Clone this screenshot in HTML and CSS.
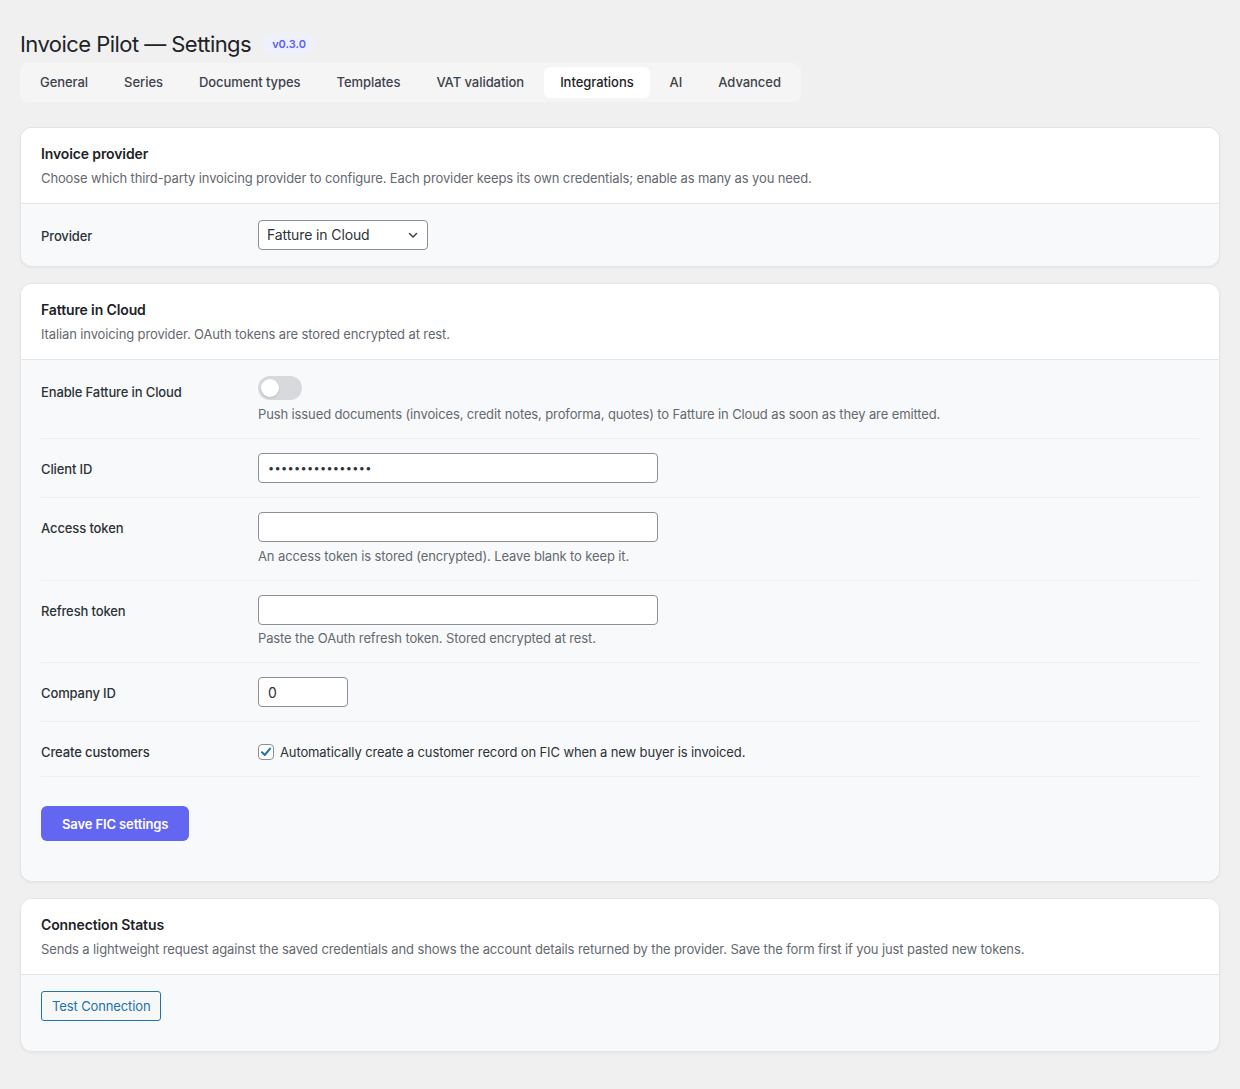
FILE: index.html
```html
<!DOCTYPE html>
<html lang="en">
<head>
<meta charset="utf-8">
<title>Invoice Pilot — Settings</title>
<link rel="stylesheet" href="styles.css">
</head>
<body>
<div class="wrap">
  <div class="page-head">
    <h1 class="page-title">Invoice Pilot — Settings</h1>
    <span class="version">v0.3.0</span>
  </div>

  <nav class="tabs">
    <a class="tab" href="#">General</a>
    <a class="tab" href="#">Series</a>
    <a class="tab" href="#">Document types</a>
    <a class="tab" href="#">Templates</a>
    <a class="tab" href="#">VAT validation</a>
    <a class="tab is-active" href="#">Integrations</a>
    <a class="tab" href="#">AI</a>
    <a class="tab" href="#">Advanced</a>
  </nav>

  <section class="card">
    <header class="card-head">
      <h2 class="card-title">Invoice provider</h2>
      <p class="card-desc">Choose which third-party invoicing provider to configure. Each provider keeps its own credentials; enable as many as you need.</p>
    </header>
    <div class="card-body">
      <div class="field-row field-row-single">
        <div class="field-label">Provider</div>
        <div class="field-control">
          <div class="select">
            <span>Fatture in Cloud</span>
            <svg class="chevron" width="12" height="12" viewBox="0 0 12 12" aria-hidden="true"><path d="M2.5 4.5 6 8l3.5-3.5" fill="none" stroke="#3c434a" stroke-width="1.5" stroke-linecap="round" stroke-linejoin="round"/></svg>
          </div>
        </div>
      </div>
    </div>
  </section>

  <section class="card">
    <header class="card-head">
      <h2 class="card-title">Fatture in Cloud</h2>
      <p class="card-desc">Italian invoicing provider. OAuth tokens are stored encrypted at rest.</p>
    </header>
    <div class="card-body card-body-form">
      <div class="field-row field-row-first">
        <div class="field-label field-label-toggle">Enable Fatture in Cloud</div>
        <div class="field-control">
          <span class="toggle"><span class="toggle-knob"></span></span>
          <p class="help help-toggle">Push issued documents (invoices, credit notes, proforma, quotes) to Fatture in Cloud as soon as they are emitted.</p>
        </div>
      </div>
      <div class="field-row">
        <div class="field-label">Client ID</div>
        <div class="field-control">
          <input class="text-input wide" type="password" value="abcdefghijklmnop">
        </div>
      </div>
      <div class="field-row">
        <div class="field-label">Access token</div>
        <div class="field-control">
          <input class="text-input wide" type="text" value="">
          <p class="help">An access token is stored (encrypted). Leave blank to keep it.</p>
        </div>
      </div>
      <div class="field-row">
        <div class="field-label">Refresh token</div>
        <div class="field-control">
          <input class="text-input wide" type="text" value="">
          <p class="help">Paste the OAuth refresh token. Stored encrypted at rest.</p>
        </div>
      </div>
      <div class="field-row">
        <div class="field-label">Company ID</div>
        <div class="field-control">
          <input class="text-input narrow" type="text" value="0">
        </div>
      </div>
      <div class="field-row">
        <div class="field-label">Create customers</div>
        <div class="field-control field-control-check">
          <label class="check">
            <span class="check-box">
              <svg width="14" height="14" viewBox="0 0 14 14" aria-hidden="true"><path d="M3 7.3 5.8 10 11 3.6" fill="none" stroke="#2271b1" stroke-width="2" stroke-linecap="round" stroke-linejoin="round"/></svg>
            </span>
            <span>Automatically create a customer record on FIC when a new buyer is invoiced.</span>
          </label>
        </div>
      </div>
      <div class="form-actions">
        <button class="btn-primary" type="button">Save FIC settings</button>
      </div>
    </div>
  </section>

  <section class="card">
    <header class="card-head">
      <h2 class="card-title">Connection Status</h2>
      <p class="card-desc">Sends a lightweight request against the saved credentials and shows the account details returned by the provider. Save the form first if you just pasted new tokens.</p>
    </header>
    <div class="card-body card-body-status">
      <button class="btn-secondary" type="button">Test Connection</button>
    </div>
  </section>
</div>
</body>
</html>
```

FILE: styles.css
```css
* {
  box-sizing: border-box;
}

html,
body {
  margin: 0;
  padding: 0;
}

body {
  background: #f0f0f1;
  color: #1d2327;
  font-family: Inter, "Noto Sans", "Liberation Sans", sans-serif;
  font-size: 13px;
  line-height: 20px;
  letter-spacing: -0.12px;
}

.wrap {
  padding: 29px 20px 20px;
}

/* Page heading */
.page-head {
  display: flex;
  align-items: center;
  gap: 12px;
  height: 30px;
}

.page-title {
  margin: 0;
  font-size: 22px;
  font-weight: 400;
  line-height: 30px;
  color: #1d2327;
  letter-spacing: -0.55px;
}

.version {
  display: inline-block;
  padding: 0 9px;
  height: 20px;
  line-height: 20px;
  border-radius: 10px;
  background: #eef0fe;
  color: #5a5ff0;
  font-size: 11px;
  font-weight: 600;
  letter-spacing: 0;
}

/* Tabs */
.tabs {
  display: inline-flex;
  gap: 4px;
  margin-top: 4px;
  padding: 4px;
  background: #f5f5f6;
  border-radius: 8px;
}

.tab {
  display: block;
  height: 31px;
  line-height: 31px;
  padding: 0 16px;
  border-radius: 6px;
  color: #3c434a;
  font-size: 13px;
  font-weight: 500;
  letter-spacing: -0.05px;
  text-decoration: none;
}

.tab.is-active {
  background: #ffffff;
  color: #1d2327;
}

/* Cards */
.card {
  margin-top: 25px;
  background: #f8f9fa;
  border: 1px solid #e4e5e7;
  border-radius: 12px;
  box-shadow: 0 1px 3px rgba(0, 0, 0, 0.05);
  overflow: hidden;
}

.card + .card {
  margin-top: 16px;
}

.card-head {
  padding: 16px 20px 15px;
  background: #ffffff;
  border-bottom: 1px solid #e4e5e7;
}

.card-title {
  margin: 0 0 4px;
  font-size: 14px;
  line-height: 20px;
  font-weight: 600;
  color: #1d2327;
}

.card-desc {
  margin: 0;
  color: #646970;
  font-size: 13px;
  line-height: 20px;
}

.card-body {
  padding: 16px 20px;
}

.card-body-form {
  padding-bottom: 16px;
}

.card-body-status {
  padding-bottom: 30px;
}

/* Form rows */
.field-row {
  display: flex;
  padding: 14px 0;
  border-bottom: 1px solid #eceef0;
}

.field-row-first {
  padding-top: 0;
}

.field-row-single {
  padding: 0;
  border-bottom: 0;
}

.field-label {
  flex: 0 0 217px;
  padding-top: 6px;
  color: #2c3338;
  font-weight: 500;
  line-height: 20px;
}

.field-label-toggle {
  padding-top: 6px;
}

.field-control {
  flex: 1;
  min-width: 0;
}

.field-control-check {
  padding-top: 6px;
}

.help {
  margin: 3.5px 0 0;
  color: #646970;
  line-height: 20px;
}

.help-toggle {
  margin-top: 4px;
}

/* Select */
.select {
  display: flex;
  align-items: center;
  justify-content: space-between;
  width: 170px;
  height: 30px;
  padding: 0 8px 0 8px;
  background: #ffffff;
  border: 1px solid #8c8f94;
  border-radius: 4px;
  color: #2c3338;
  font-size: 14px;
}

/* Text inputs */
.text-input {
  display: block;
  height: 30px;
  padding: 0 9px;
  background: #ffffff;
  border: 1px solid #8c8f94;
  border-radius: 4px;
  color: #2c3338;
  font-family: inherit;
  font-size: 14px;
  outline: none;
}

.text-input.wide {
  width: 400px;
}

.text-input.narrow {
  width: 90px;
}

.text-input[type="password"] {
  font-size: 11px;
  letter-spacing: 0.3px;
}

/* Toggle switch */
.toggle {
  display: block;
  position: relative;
  width: 44px;
  height: 24px;
  border-radius: 12px;
  background: #d7d9dd;
}

.toggle-knob {
  position: absolute;
  top: 3px;
  left: 3px;
  width: 18px;
  height: 18px;
  border-radius: 50%;
  background: #ffffff;
  box-shadow: 0 1px 2px rgba(0, 0, 0, 0.15);
}

/* Checkbox */
.check {
  display: flex;
  align-items: center;
  gap: 6px;
  color: #2c3338;
}

.check-box {
  display: flex;
  align-items: center;
  justify-content: center;
  width: 16px;
  height: 16px;
  background: #ffffff;
  border: 1px solid #8c8f94;
  border-radius: 4px;
}

/* Buttons */
.form-actions {
  padding: 29px 0 24px;
}

.btn-primary {
  height: 35px;
  padding: 0 21px;
  background: #6366f1;
  border: 0;
  border-radius: 6px;
  color: #ffffff;
  font-family: inherit;
  font-size: 13px;
  font-weight: 600;
  letter-spacing: -0.12px;
}

.btn-secondary {
  height: 30px;
  padding: 0 10px;
  background: #f6f7f7;
  border: 1px solid #2271b1;
  border-radius: 3px;
  color: #2271b1;
  font-family: inherit;
  font-size: 13px;
  font-weight: 400;
  letter-spacing: -0.12px;
}
```
